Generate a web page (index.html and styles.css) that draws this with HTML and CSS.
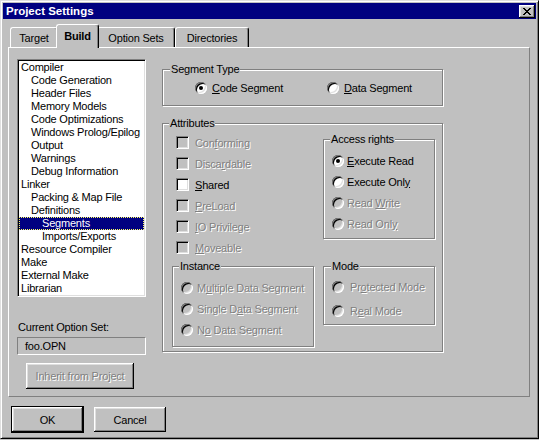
FILE: index.html
```html
<!DOCTYPE html>
<html>
<head>
<meta charset="utf-8">
<link rel="stylesheet" href="styles.css">
</head>
<body>
<div class="window">
  <div class="titlebar">
    <span class="title">Project Settings</span>
    <span class="close"><svg width="16" height="13" viewBox="0 0 16 13" shape-rendering="crispEdges"><path fill="#000" d="M4 3h2v1h-2zM10 3h2v1h-2zM5 4h2v1h-2zM9 4h2v1h-2zM6 5h4v1h-4zM7 6h2v1h-2zM6 7h4v1h-4zM5 8h2v1h-2zM9 8h2v1h-2zM4 9h2v1h-2zM10 9h2v1h-2z"/></svg></span>
  </div>
  <div class="tabs">
    <div class="tab t-target">Target</div>
    <div class="tab active t-build">Build</div>
    <div class="tab t-opt">Option Sets</div>
    <div class="tab t-dir">Directories</div>
  </div>
  <div class="panel">
    <div class="leftcol">
      <div class="listbox">
        <div class="it">Compiler</div>
        <div class="it l1">Code Generation</div>
        <div class="it l1">Header Files</div>
        <div class="it l1">Memory Models</div>
        <div class="it l1">Code Optimizations</div>
        <div class="it l1">Windows Prolog/Epilog</div>
        <div class="it l1">Output</div>
        <div class="it l1">Warnings</div>
        <div class="it l1">Debug Information</div>
        <div class="it">Linker</div>
        <div class="it l1">Packing &amp; Map File</div>
        <div class="it l1">Definitions</div>
        <div class="it l2 sel">Segments</div>
        <div class="it l2">Imports/Exports</div>
        <div class="it">Resource Compiler</div>
        <div class="it">Make</div>
        <div class="it">External Make</div>
        <div class="it">Librarian</div>
      </div>
      <div class="cur-label">Current Option Set:</div>
      <div class="textbox">foo.OPN</div>
      <div class="btn inherit"><span class="dis">Inherit from Project</span></div>
    </div>
    <div class="rightcol">
      <div class="group seg">
        <span class="legend lg-seg">Segment Type</span>
        <div class="opt opt-code"><span class="radio on"></span><span><u>C</u>ode Segment</span></div>
        <div class="opt"><span class="radio"></span><span><u>D</u>ata Segment</span></div>
      </div>
      <div class="group attrs">
        <span class="legend lg-attr">Attributes</span>
        <div class="attr-left">
          <div class="checks">
            <div class="crow"><span class="check off"></span><span class="dis">Con<u>f</u>orming</span></div>
            <div class="crow"><span class="check off"></span><span class="dis">Disca<u>r</u>dable</span></div>
            <div class="crow"><span class="check"></span><span><u>S</u>hared</span></div>
            <div class="crow"><span class="check off"></span><span class="dis"><u>P</u>reLoad</span></div>
            <div class="crow"><span class="check off"></span><span class="dis"><u>I</u>O Privilege</span></div>
            <div class="crow"><span class="check off"></span><span class="dis"><u>M</u>oveable</span></div>
          </div>
          <div class="group instance">
            <span class="legend lg-inst">Instance</span>
            <div class="rrow g4"><span class="radio off"></span><span class="dis">M<u>u</u>ltiple Data Segment</span></div>
            <div class="rrow g4"><span class="radio off"></span><span class="dis">Single D<u>a</u>ta Segment</span></div>
            <div class="rrow g4"><span class="radio off"></span><span class="dis">N<u>o</u> Data Segment</span></div>
          </div>
        </div>
        <div class="attr-right">
          <div class="group access">
            <span class="legend lg-acc">Access rights</span>
            <div class="rrow g3"><span class="radio on"></span><span><u>E</u>xecute Read</span></div>
            <div class="rrow g3"><span class="radio"></span><span>Execute Onl<u>y</u></span></div>
            <div class="rrow g3"><span class="radio off"></span><span class="dis">Read <u>W</u>rite</span></div>
            <div class="rrow g3"><span class="radio off"></span><span class="dis">Read Onl<u>y</u></span></div>
          </div>
          <div class="group mode">
            <span class="legend lg-mode">Mode</span>
            <div class="rrow tall g6"><span class="radio off"></span><span class="dis">Pr<u>o</u>tected Mode</span></div>
            <div class="rrow tall g6"><span class="radio off"></span><span class="dis">R<u>e</u>al Mode</span></div>
          </div>
        </div>
      </div>
    </div>
  </div>
  <div class="buttons">
    <div class="btn default ok">OK</div>
    <div class="btn cancel">Cancel</div>
  </div>
</div>
</body>
</html>
```
FILE: styles.css
```css
body {
  margin: 0;
  background: #c0c0c0;
  font-family: "Liberation Sans", Arial, sans-serif;
  font-size: 11px;
  letter-spacing: -0.2px;
  color: #000;
}

.window {
  width: 539px;
  height: 439px;
  box-sizing: border-box;
  border: 1px solid;
  border-color: #dfdfdf #000 #000 #dfdfdf;
  box-shadow: inset 1px 1px 0 #fff, inset -1px -1px 0 #808080;
  padding: 2px;
  background: #c0c0c0;
}

.titlebar {
  height: 16px;
  background: #000080;
  display: flex;
  align-items: center;
  justify-content: space-between;
  padding-left: 3px;
  color: #fff;
  font-weight: bold;
  font-size: 11.5px;
  letter-spacing: 0;
}

.close {
  width: 16px;
  height: 13px;
  margin-right: 1px;
  background: #c0c0c0;
  box-shadow: inset -1px -1px 0 #000, inset 1px 1px 0 #fff, inset -2px -2px 0 #808080, inset 2px 2px 0 #dfdfdf;
  display: block;
}
.close svg { display: block; }

.tabs {
  display: flex;
  align-items: flex-end;
  height: 23px;
  margin-top: 5px;
  padding-left: 7px;
  position: relative;
  z-index: 1;
}

.tab {
  height: 20px;
  box-sizing: border-box;
  border-top: 1px solid #fff;
  border-left: 1px solid #fff;
  border-right: 1px solid #000;
  box-shadow: inset -1px 0 0 #808080;
  border-radius: 3px 3px 0 0;
  display: flex;
  align-items: center;
  justify-content: center;
  padding-top: 1px;
}
.t-target { width: 48px; }
.t-build { width: 43px; }
.t-opt { width: 78px; }
.t-dir { width: 74px; }
.tab.active {
  height: 24px;
  margin: 0 -2px -1px;
  font-weight: bold;
  background: #c0c0c0;
  position: relative;
  z-index: 2;
  padding-top: 0;
  padding-bottom: 2px;
}

.panel {
  width: 522px;
  height: 350px;
  box-sizing: border-box;
  margin-left: 5px;
  border: 1px solid;
  border-color: #fff #808080 #808080 #fff;
  display: flex;
  align-items: flex-start;
  gap: 16px;
  padding: 11px 0 0 8px;
}

.leftcol {
  width: 129px;
  display: flex;
  flex-direction: column;
  align-items: flex-start;
}

.listbox {
  width: 129px;
  height: 238px;
  box-sizing: border-box;
  background: #fff;
  border: 1px solid;
  border-color: #808080 #fff #fff #808080;
  box-shadow: inset 1px 1px 0 #000, inset -1px -1px 0 #dfdfdf;
  padding: 1px;
  overflow: hidden;
}

.it {
  height: 13px;
  line-height: 13px;
  white-space: nowrap;
  padding-left: 2px;
}
.it.l1 { padding-left: 12px; }
.it.l2 { padding-left: 23px; }
.it.sel {
  background: #000080;
  color: #fff;
  outline: 1px dotted #ffff60;
  outline-offset: -1px;
}

.cur-label {
  margin-top: 24px;
  margin-left: 1px;
  line-height: 13px;
}

.textbox {
  margin-top: 3px;
  width: 129px;
  height: 18px;
  box-sizing: border-box;
  border: 1px solid;
  border-color: #808080 #fff #fff #808080;
  padding-left: 7px;
  line-height: 16px;
}

.btn {
  box-sizing: border-box;
  display: flex;
  align-items: center;
  justify-content: center;
  background: #c0c0c0;
  box-shadow: inset -1px -1px 0 #000, inset 1px 1px 0 #fff, inset -2px -2px 0 #808080, inset 2px 2px 0 #dfdfdf;
}

.inherit {
  margin-top: 8px;
  margin-left: 9px;
  width: 108px;
  height: 26px;
}

.dis {
  color: #808080;
  text-shadow: 1px 1px 0 #fff;
}

.rightcol {
  width: 281px;
  display: flex;
  flex-direction: column;
}

.group {
  position: relative;
  box-sizing: border-box;
  border: 1px solid #808080;
  box-shadow: 1px 1px 0 #fff, inset 1px 1px 0 #fff;
}

.legend {
  position: absolute;
  top: -7px;
  padding: 0 1px;
  background: #c0c0c0;
  line-height: 13px;
  white-space: nowrap;
}
.lg-seg { left: 7px; }
.lg-attr { left: 6px; }
.lg-acc { left: 6px; }
.lg-inst { left: 6px; }
.lg-mode { left: 7px; }

.seg {
  margin-top: 10px;
  height: 37px;
  display: flex;
  align-items: flex-start;
  padding: 11px 0 0 32px;
}

.opt {
  display: flex;
  align-items: center;
  gap: 5px;
  height: 13px;
  white-space: nowrap;
}
.opt-code { width: 132px; }

.attrs {
  margin-top: 17px;
  height: 229px;
  display: flex;
  align-items: flex-start;
  gap: 9px;
  padding: 8px 7px 0 9px;
}

.attr-left {
  width: 142px;
  display: flex;
  flex-direction: column;
}

.attr-right {
  width: 112px;
  display: flex;
  flex-direction: column;
}

.crow {
  height: 21px;
  display: flex;
  align-items: center;
  gap: 6px;
  padding-left: 4px;
  white-space: nowrap;
}

.check {
  width: 13px;
  height: 13px;
  box-sizing: border-box;
  flex: none;
  border: 1px solid;
  border-color: #808080 #fff #fff #808080;
  box-shadow: inset 1px 1px 0 #000, inset -1px -1px 0 #dfdfdf;
  background: #fff;
}
.check.off { background: #c0c0c0; }

.radio {
  width: 12px;
  height: 12px;
  flex: none;
  border-radius: 50%;
  background: #fff;
  position: relative;
  box-shadow: inset 1px 1px 0 #808080, inset -1px -1px 0 #fff, inset 2px 2px 0 #000, inset -2px -2px 0 #dfdfdf;
}
.radio.off { background: #c0c0c0; }
.radio.on::after {
  content: "";
  position: absolute;
  left: 4px;
  top: 4px;
  width: 4px;
  height: 4px;
  border-radius: 50%;
  background: #000;
}

.rrow {
  height: 21px;
  display: flex;
  align-items: center;
  white-space: nowrap;
}
.rrow.tall { height: 24px; }
.g3 { gap: 3px; }
.g4 { gap: 4px; }
.g6 { gap: 6px; }

.instance {
  margin-top: 8px;
  height: 81px;
  padding: 10px 0 0 8px;
}

.access {
  margin-top: 7px;
  height: 100px;
  padding: 10px 0 0 8px;
}

.mode {
  margin-top: 27px;
  height: 59px;
  padding: 8px 0 0 8px;
}

.buttons {
  display: flex;
  align-items: flex-start;
  margin-top: 9px;
  padding-left: 8px;
}

.ok {
  width: 73px;
  height: 27px;
  border: 1px solid #000;
}

.cancel {
  width: 72px;
  height: 25px;
  margin-left: 10px;
  margin-top: 1px;
}
```
